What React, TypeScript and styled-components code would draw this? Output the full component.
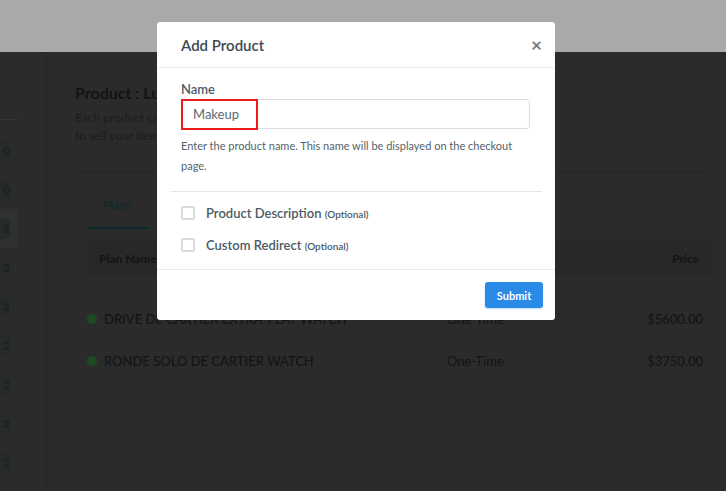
import React from "react";
import styled, { createGlobalStyle } from "styled-components";

const GlobalStyle = createGlobalStyle`
  html, body {
    margin: 0;
    padding: 0;
    background: #2b2b2b;
    font-family: Lato, "Open Sans", Arial, sans-serif;
  }
  * {
    box-sizing: border-box;
  }
`;

interface Plan {
  name: string;
  type: string;
  price: string;
}

const plans: Plan[] = [
  { name: "DRIVE DE CARTIER EXTRA-FLAT WATCH", type: "One-Time", price: "$5600.00" },
  { name: "RONDE SOLO DE CARTIER WATCH", type: "One-Time", price: "$3750.00" },
];

const sideItems = ["0", "0", "2", "2", "2", "2", "2", "2", "2"];

const Page = styled.div`
  position: relative;
  width: 726px;
  height: 491px;
  display: flex;
  flex-direction: column;
  overflow: hidden;
`;

// page behind the dialog is drawn already dimmed
const TopBar = styled.div`
  height: 52px;
  background: #a9a9a9;
  flex-shrink: 0;
`;

const Body = styled.div`
  flex: 1;
  display: flex;
  background: #2b2b2b;
`;

const Sidebar = styled.div`
  width: 47px;
  border-right: 1px solid #242424;
  padding-top: 67px;
`;

const SideHead = styled.div`
  width: 17px;
  border-top: 1px solid #353535;
  margin-bottom: 21px;
`;

const SideItem = styled.div<{ active?: boolean }>`
  width: 17px;
  height: 39px;
  display: flex;
  align-items: center;
  background: ${(p) => (p.active ? "#2f3030" : "transparent")};
  margin-top: -10px;
  margin-bottom: 10px;
`;

const SideBadge = styled.div`
  width: 10px;
  height: 20px;
  border-radius: 0 4px 4px 0;
  background: #262a2b;
  color: #1c1f20;
  font-size: 11px;
  font-weight: 700;
  line-height: 20px;
  text-align: right;
  overflow: hidden;
`;

const Main = styled.div`
  flex: 1;
  padding: 31px 15px 0 28px;
  color: #161616;
`;

const Title = styled.h1`
  margin: 0;
  font-size: 16px;
  font-weight: 700;
  line-height: 20px;
  color: #141414;
`;

const Lead = styled.p`
  margin: 6px 0 0;
  max-width: 470px;
  font-size: 12px;
  line-height: 18px;
  color: #1c1c1c;
`;

const Divider = styled.div`
  border-top: 1px solid #252525;
  margin-top: 26px;
`;

const Section = styled.div`
  padding: 0 0 0 12px;
`;

const Tabs = styled.div`
  display: flex;
  margin-top: 22px;
`;

const Tab = styled.div<{ active?: boolean }>`
  width: 63px;
  padding-left: 16px;
  height: 35px;
  font-size: 12px;
  font-weight: 600;
  color: #0f2a2c;
  border-bottom: 2px solid ${(p) => (p.active ? "#10292b" : "transparent")};
  line-height: 22px;
`;

const TableHead = styled.div`
  margin-top: 11px;
  height: 36px;
  background: #282828;
  display: flex;
  align-items: center;
  justify-content: space-between;
  padding: 0 12px;
  font-size: 12px;
  font-weight: 700;
  color: #141414;
`;

const Row = styled.div<{ first?: boolean }>`
  display: grid;
  grid-template-columns: 360px 1fr auto;
  align-items: center;
  height: ${(p) => (p.first ? 64 : 43)}px;
  padding-top: ${(p) => (p.first ? 22 : 0)}px;
  padding-right: 8px;
  border-bottom: 1px solid #262626;
  font-size: 13px;
  color: #141414;
`;

const PlanName = styled.div`
  display: flex;
  align-items: center;
  gap: 7px;
  font-weight: 500;
`;

const Dot = styled.span`
  width: 10px;
  height: 10px;
  border-radius: 50%;
  background: #1d4b1d;
`;

const Price = styled.div`
  font-size: 13px;
  font-weight: 500;
`;

/* modal */

const Modal = styled.div`
  position: absolute;
  left: 157px;
  top: 22px;
  width: 398px;
  height: 298px;
  background: #ffffff;
  border-radius: 3px;
  display: flex;
  flex-direction: column;
  color: #4b5b65;
`;

const ModalHeader = styled.div`
  height: 46px;
  display: flex;
  align-items: center;
  justify-content: space-between;
  padding: 0 13px 0 24px;
  border-bottom: 1px solid #e7e9ea;
`;

const ModalTitle = styled.div`
  font-size: 15px;
  font-weight: 600;
  color: #3b4a54;
`;

const Close = styled.div`
  font-size: 19px;
  font-weight: 700;
  color: #7a7a7a;
  line-height: 1;
`;

const ModalBody = styled.div`
  padding: 13px 25px 0 24px;
  flex: 1;
`;

const Label = styled.div`
  font-size: 13px;
  font-weight: 600;
  line-height: 16px;
  color: #4b5b65;
`;

const InputWrap = styled.div`
  position: relative;
  margin-top: 2px;
`;

const Input = styled.div`
  height: 30px;
  border: 1px solid #dcdfe1;
  border-radius: 3px;
  padding-left: 11px;
  display: flex;
  align-items: center;
  font-size: 13px;
  color: #5b6a72;
`;

const Highlight = styled.div`
  position: absolute;
  left: 0;
  top: 0;
  width: 77px;
  height: 31px;
  border: 2px solid #ec1b1b;
`;

const Help = styled.div`
  margin-top: 7px;
  font-size: 11px;
  line-height: 20px;
  color: #54626a;
`;

const BodyRule = styled.div`
  margin: 15px -12px 0 -10px;
  border-top: 1px solid #e3e5e6;
`;

const Options = styled.div`
  padding-top: 11px;
  display: flex;
  flex-direction: column;
  gap: 12px;
`;

const Option = styled.label`
  display: flex;
  align-items: center;
  gap: 11px;
  height: 20px;
`;

const Check = styled.span`
  width: 14px;
  height: 14px;
  border: 2px solid #d9dcdd;
  border-radius: 2px;
  flex-shrink: 0;
`;

const OptionText = styled.span`
  font-size: 13px;
  font-weight: 600;
  color: #4b5b65;
`;

const Muted = styled.span`
  font-size: 10px;
  font-weight: 600;
`;

const ModalFooter = styled.div`
  height: 51px;
  border-top: 1px solid #e7e9ea;
  display: flex;
  align-items: center;
  justify-content: flex-end;
  padding-right: 12px;
`;

const Submit = styled.button`
  width: 58px;
  height: 26px;
  border: none;
  border-radius: 3px;
  background: #2a8be7;
  color: #ffffff;
  font-family: inherit;
  font-size: 11px;
  font-weight: 700;
  box-shadow: 0 1px 2px rgba(42, 139, 231, 0.3);
`;

export default function App() {
  return (
    <Page>
      <GlobalStyle />
      <TopBar />
      <Body>
        <Sidebar>
          <SideHead />
          {sideItems.map((s, i) => (
            <SideItem key={i} active={i === 2}>
              <SideBadge>{s}</SideBadge>
            </SideItem>
          ))}
        </Sidebar>
        <Main>
          <Title>Product : Luxury Watches</Title>
          <Lead>
            Each product can have multiple plans. Create one or more plans
            <br />
            to sell your items at different price points.
          </Lead>
          <Divider />
          <Section>
            <Tabs>
              <Tab active>Plans</Tab>
            </Tabs>
            <TableHead>
              <span>Plan Name</span>
              <span>Price</span>
            </TableHead>
            {plans.map((p, i) => (
              <Row key={p.name} first={i === 0}>
                <PlanName>
                  <Dot />
                  {p.name}
                </PlanName>
                <div>{p.type}</div>
                <Price>{p.price}</Price>
              </Row>
            ))}
          </Section>
        </Main>
      </Body>

      <Modal>
        <ModalHeader>
          <ModalTitle>Add Product</ModalTitle>
          <Close>×</Close>
        </ModalHeader>
        <ModalBody>
          <Label>Name</Label>
          <InputWrap>
            <Input>Makeup</Input>
            <Highlight />
          </InputWrap>
          <Help>
            Enter the product name. This name will be displayed on the checkout
            page.
          </Help>
          <BodyRule />
          <Options>
            <Option>
              <Check />
              <OptionText>
                Product Description <Muted>(Optional)</Muted>
              </OptionText>
            </Option>
            <Option>
              <Check />
              <OptionText>
                Custom Redirect <Muted>(Optional)</Muted>
              </OptionText>
            </Option>
          </Options>
        </ModalBody>
        <ModalFooter>
          <Submit>Submit</Submit>
        </ModalFooter>
      </Modal>
    </Page>
  );
}
